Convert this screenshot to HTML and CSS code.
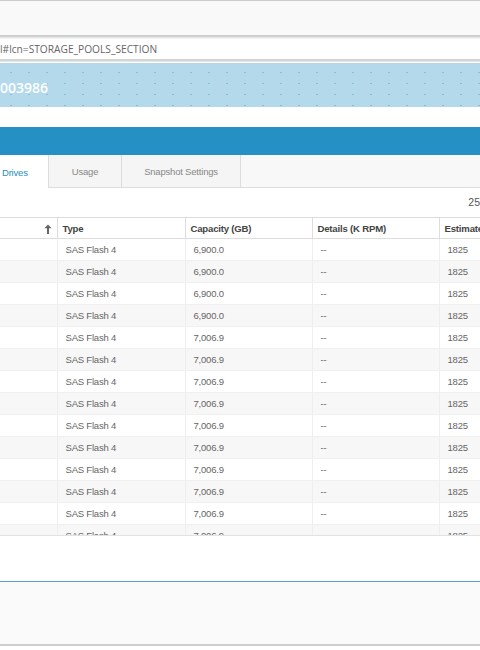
FILE: index.html
```html
<!doctype html>
<html lang="en">
<head>
    <meta name="viewport" content="width=device-width">
    <meta charset="utf-8">
    <title>Storage Pools</title>

    <link rel="stylesheet" href="styles.css">
</head>
<body>

<div class="chrome"></div>
<div class="address">l#lcn=STORAGE_POOLS_SECTION</div>

<div class="banner">003986</div>
<div class="spacer"></div>
<div class="nav"></div>

<ul class="tabs">
    <li class="tab tab_active">Drives</li>
    <li class="tab tab_usage">Usage</li>
    <li class="tab tab_snap">Snapshot Settings</li>
    <li class="tab-fill"></li>
</ul>

<div class="toolbar">25</div>

<div class="grid">
    <table class="drives">
        <colgroup>
            <col class="col-name">
            <col class="col-type">
            <col class="col-cap">
            <col class="col-det">
            <col class="col-est">
        </colgroup>
        <thead>
            <tr>
                <th class="th-name">
                    <svg class="sort" width="8" height="10" viewBox="0 0 8 10">
                        <path d="M4 0.5 L7.6 4.2 L5 4.2 L5 10 L3 10 L3 4.2 L0.4 4.2 Z" fill="#666"/>
                    </svg>
                </th>
                <th>Type</th>
                <th>Capacity (GB)</th>
                <th>Details (K RPM)</th>
                <th>Estimated</th>
            </tr>
        </thead>
        <tbody>
            <tr><td></td><td>SAS Flash 4</td><td>6,900.0</td><td>--</td><td>1825</td></tr>
            <tr><td></td><td>SAS Flash 4</td><td>6,900.0</td><td>--</td><td>1825</td></tr>
            <tr><td></td><td>SAS Flash 4</td><td>6,900.0</td><td>--</td><td>1825</td></tr>
            <tr><td></td><td>SAS Flash 4</td><td>6,900.0</td><td>--</td><td>1825</td></tr>
            <tr><td></td><td>SAS Flash 4</td><td>7,006.9</td><td>--</td><td>1825</td></tr>
            <tr><td></td><td>SAS Flash 4</td><td>7,006.9</td><td>--</td><td>1825</td></tr>
            <tr><td></td><td>SAS Flash 4</td><td>7,006.9</td><td>--</td><td>1825</td></tr>
            <tr><td></td><td>SAS Flash 4</td><td>7,006.9</td><td>--</td><td>1825</td></tr>
            <tr><td></td><td>SAS Flash 4</td><td>7,006.9</td><td>--</td><td>1825</td></tr>
            <tr><td></td><td>SAS Flash 4</td><td>7,006.9</td><td>--</td><td>1825</td></tr>
            <tr><td></td><td>SAS Flash 4</td><td>7,006.9</td><td>--</td><td>1825</td></tr>
            <tr><td></td><td>SAS Flash 4</td><td>7,006.9</td><td>--</td><td>1825</td></tr>
            <tr><td></td><td>SAS Flash 4</td><td>7,006.9</td><td>--</td><td>1825</td></tr>
            <tr><td></td><td>SAS Flash 4</td><td>7,006.9</td><td>--</td><td>1825</td></tr>
        </tbody>
    </table>
</div>

<div class="after-grid"></div>
<div class="footer"></div>

</body>
</html>
```

FILE: styles.css
```css
html, body {
    margin: 0;
    padding: 0;
    background: #fff;
    color: #666;
    font-family: "Liberation Sans", Arial, sans-serif;
    overflow: hidden;
}

.chrome {
    height: 34px;
    border-top: 1px solid #ccc;
    background: #f9f9f9;
}

.address {
    height: 19px;
    line-height: 19px;
    border-top: 2px solid #cfcfcf;
    border-bottom: 2px solid #d4d4d4;
    box-shadow: inset 0 1px 0 #e8e8e8, inset 0 2px 0 #f0f0f0, 0 1px 0 #e6e6e6;
    padding-top: 3px;
    margin-bottom: 2px;
    font-family: "Open Sans", sans-serif;
    font-size: 10.2px;
    color: #666;
    white-space: nowrap;
}

.banner {
    height: 44px;
    line-height: 49px;
    background-color: #b3d9eb;
    background-image: radial-gradient(circle, #86bfdc 0.7px, transparent 1.1px);
    background-size: 18px 11px;
    background-position: 2px 4px;
    color: #fff;
    font-family: "Open Sans", sans-serif;
    font-weight: 600;
    font-size: 14px;
}

.spacer {
    height: 20px;
}

.nav {
    height: 28px;
    background: #2590c3;
}

.tabs {
    list-style: none;
    margin: 0;
    padding: 0;
    display: flex;
    height: 33px;
    font-size: 9.5px;
    letter-spacing: -0.2px;
}
    .tab {
        display: flex;
        align-items: center;
        justify-content: center;
        padding-top: 1px;
        box-sizing: border-box;
        background: #f5f5f5;
        border-left: 1px solid #ddd;
        border-bottom: 1px solid #ddd;
        color: #888;
    }
    .tab_active {
        width: 48px;
        justify-content: flex-start;
        padding-left: 2px;
        background: #fff;
        border: 0;
        color: #2590c3;
    }
    .tab_usage {
        width: 73px;
    }
    .tab_snap {
        width: 119px;
    }
    .tab-fill {
        flex: auto;
        background: #f8f8f8;
        border-left: 1px solid #ddd;
        border-bottom: 1px solid #ddd;
    }

.toolbar {
    height: 29px;
    line-height: 28px;
    text-align: right;
    font-size: 10.5px;
    color: #555;
    white-space: nowrap;
}

.grid {
    height: 318px;
    overflow: hidden;
    border-bottom: 1px solid #e2e2e2;
}

.drives {
    border-collapse: collapse;
    table-layout: fixed;
    width: 539px;
    font-size: 9.5px;
    letter-spacing: -0.2px;
}
    .drives th {
        height: 20px;
        padding: 0 5px;
        text-align: left;
        font-weight: bold;
        font-size: 9.6px;
        color: #444;
        border-top: 1px solid #ddd;
        border-bottom: 1px solid #ddd;
        border-right: 1px solid #ddd;
        white-space: nowrap;
        overflow: hidden;
    }
    .drives td {
        height: 21px;
        padding: 0 8px;
        border-right: 1px solid #eee;
        border-bottom: 1px solid #f0f0f0;
        white-space: nowrap;
        color: #666;
    }
    .drives tbody tr:nth-child(even) td {
        background: #f7f7f7;
    }

.col-name { width: 57px; }
.col-type { width: 128px; }
.col-cap { width: 127px; }
.col-det { width: 127px; }
.col-est { width: 100px; }

.drives .th-name {
    text-align: right;
    padding-right: 5px;
}

.sort {
    display: inline-block;
    vertical-align: middle;
}

.after-grid {
    height: 45px;
    border-bottom: 1px solid #5e9fd2;
}

.footer {
    height: 62px;
    background: #fafafa;
    border-bottom: 2px solid #cfcfcf;
}
```
